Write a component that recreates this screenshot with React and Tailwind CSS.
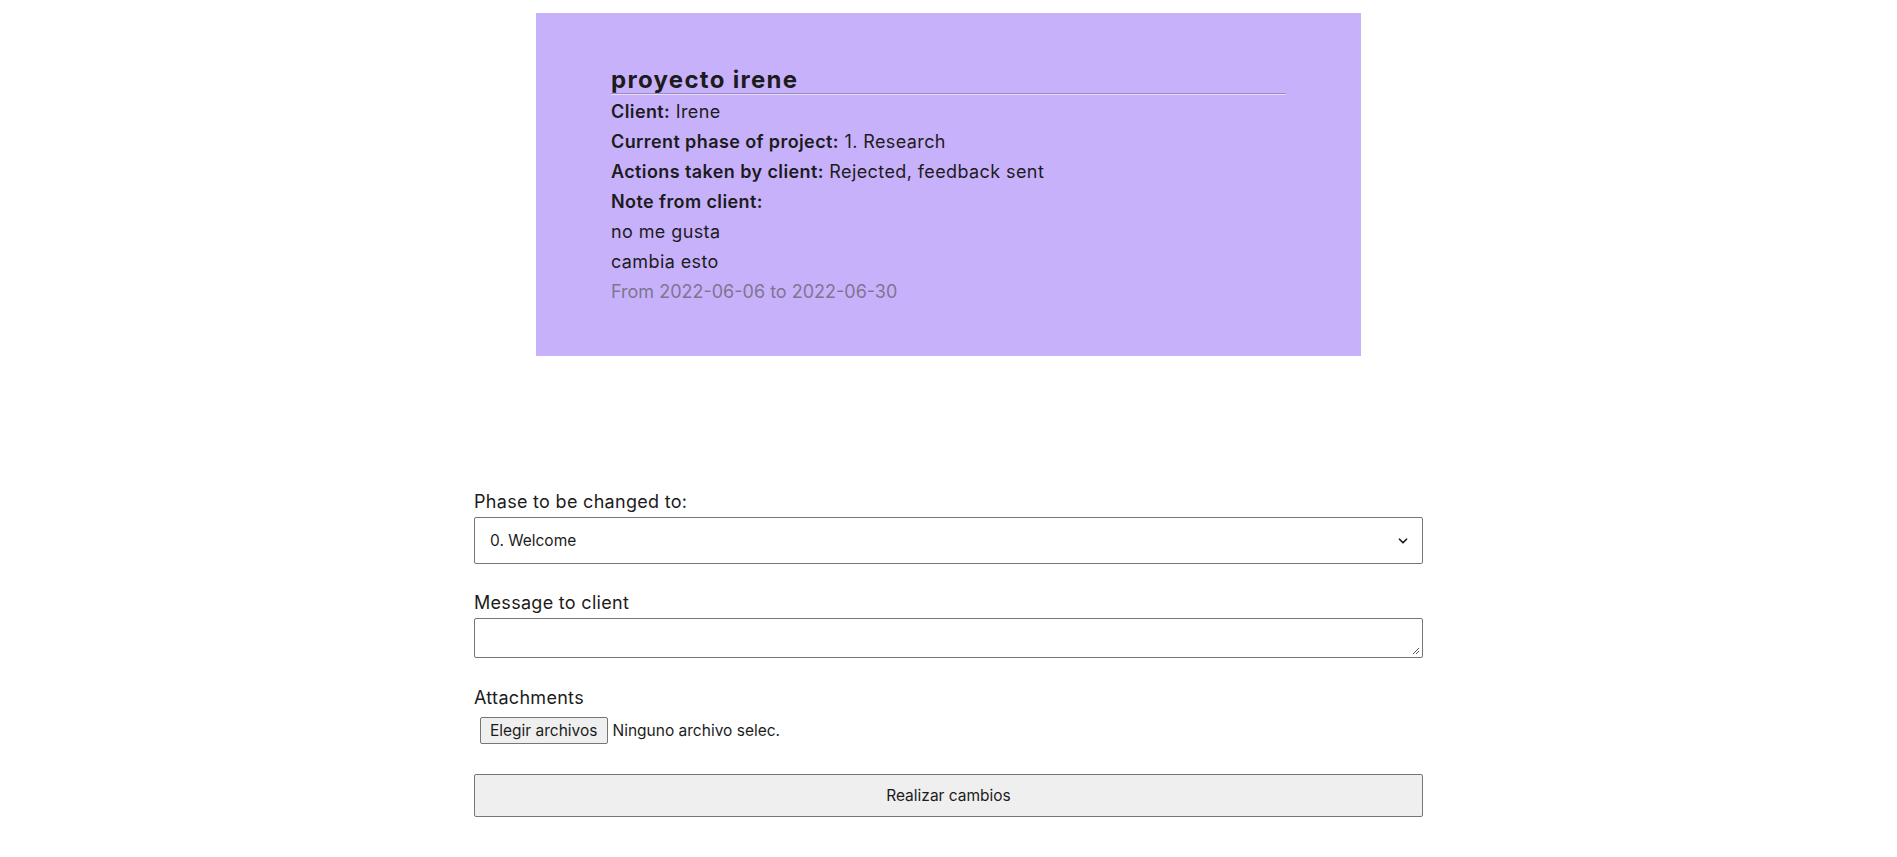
import { ChevronDown } from "lucide-react";

function Row({ label, children }) {
  return (
    <p className="leading-[30px]">
      <span className="font-semibold">{label}</span> {children}
    </p>
  );
}

export default function App() {
  return (
    <div className="min-h-screen bg-white text-[#1c1c1c] [font-family:Inter,'Noto_Sans',sans-serif]">
      <div className="mx-auto mt-[13px] w-[825px] bg-[#c8b1fb] px-[75px] pt-[53px] pb-[49px] text-[18px] tracking-[0.4px]">
        <h2 className="text-[24px] font-bold leading-[27px] tracking-[1.3px]">proyecto irene</h2>
        <div className="mb-[2px] border-t border-b border-t-[#9a8dbd] border-b-[#e6dcff]" />
        <Row label="Client:">Irene</Row>
        <Row label="Current phase of project:">1. Research</Row>
        <Row label="Actions taken by client:">Rejected, feedback sent</Row>
        <p className="font-semibold leading-[30px]">Note from client:</p>
        <p className="leading-[30px]">no me gusta</p>
        <p className="leading-[30px]">cambia esto</p>
        <p className="leading-[30px] tracking-normal text-[#7d7690]">From 2022-06-06 to 2022-06-30</p>
      </div>

      <form className="mx-auto mt-[135px] flex w-[949px] flex-col text-[18px] tracking-[0.3px]">
        <label className="leading-[22px]">Phase to be changed to:</label>
        <div className="relative mt-[4px] flex h-[47px] items-center rounded-[2px] border border-[#767676] bg-white px-[15px] text-[15.5px] tracking-normal">
          <span>0. Welcome</span>
          <ChevronDown className="absolute right-[12px] h-[14px] w-[14px]" strokeWidth={3} />
        </div>

        <label className="mt-[28px] leading-[22px]">Message to client</label>
        <div className="relative mt-[4px] h-[40px] rounded-[2px] border border-[#767676] bg-white">
          <svg className="absolute right-[2px] bottom-[2px]" width="9" height="9" viewBox="0 0 9 9">
            <path d="M8 2 L2 8 M8 5 L5 8" stroke="#555" strokeWidth="1" />
          </svg>
        </div>

        <label className="mt-[29px] leading-[22px]">Attachments</label>
        <div className="mt-[8px] flex items-center gap-[5px] pl-[6px] text-[15.5px] tracking-normal">
          <span className="flex h-[27px] items-center rounded-[2px] border border-[#767676] bg-[#efefef] px-[9px]">
            Elegir archivos
          </span>
          <span>Ninguno archivo selec.</span>
        </div>

        <button
          type="button"
          className="mt-[30px] h-[43px] w-full rounded-[2px] border border-[#767676] bg-[#efefef] text-[15.5px] tracking-normal"
        >
          Realizar cambios
        </button>
      </form>
    </div>
  );
}
